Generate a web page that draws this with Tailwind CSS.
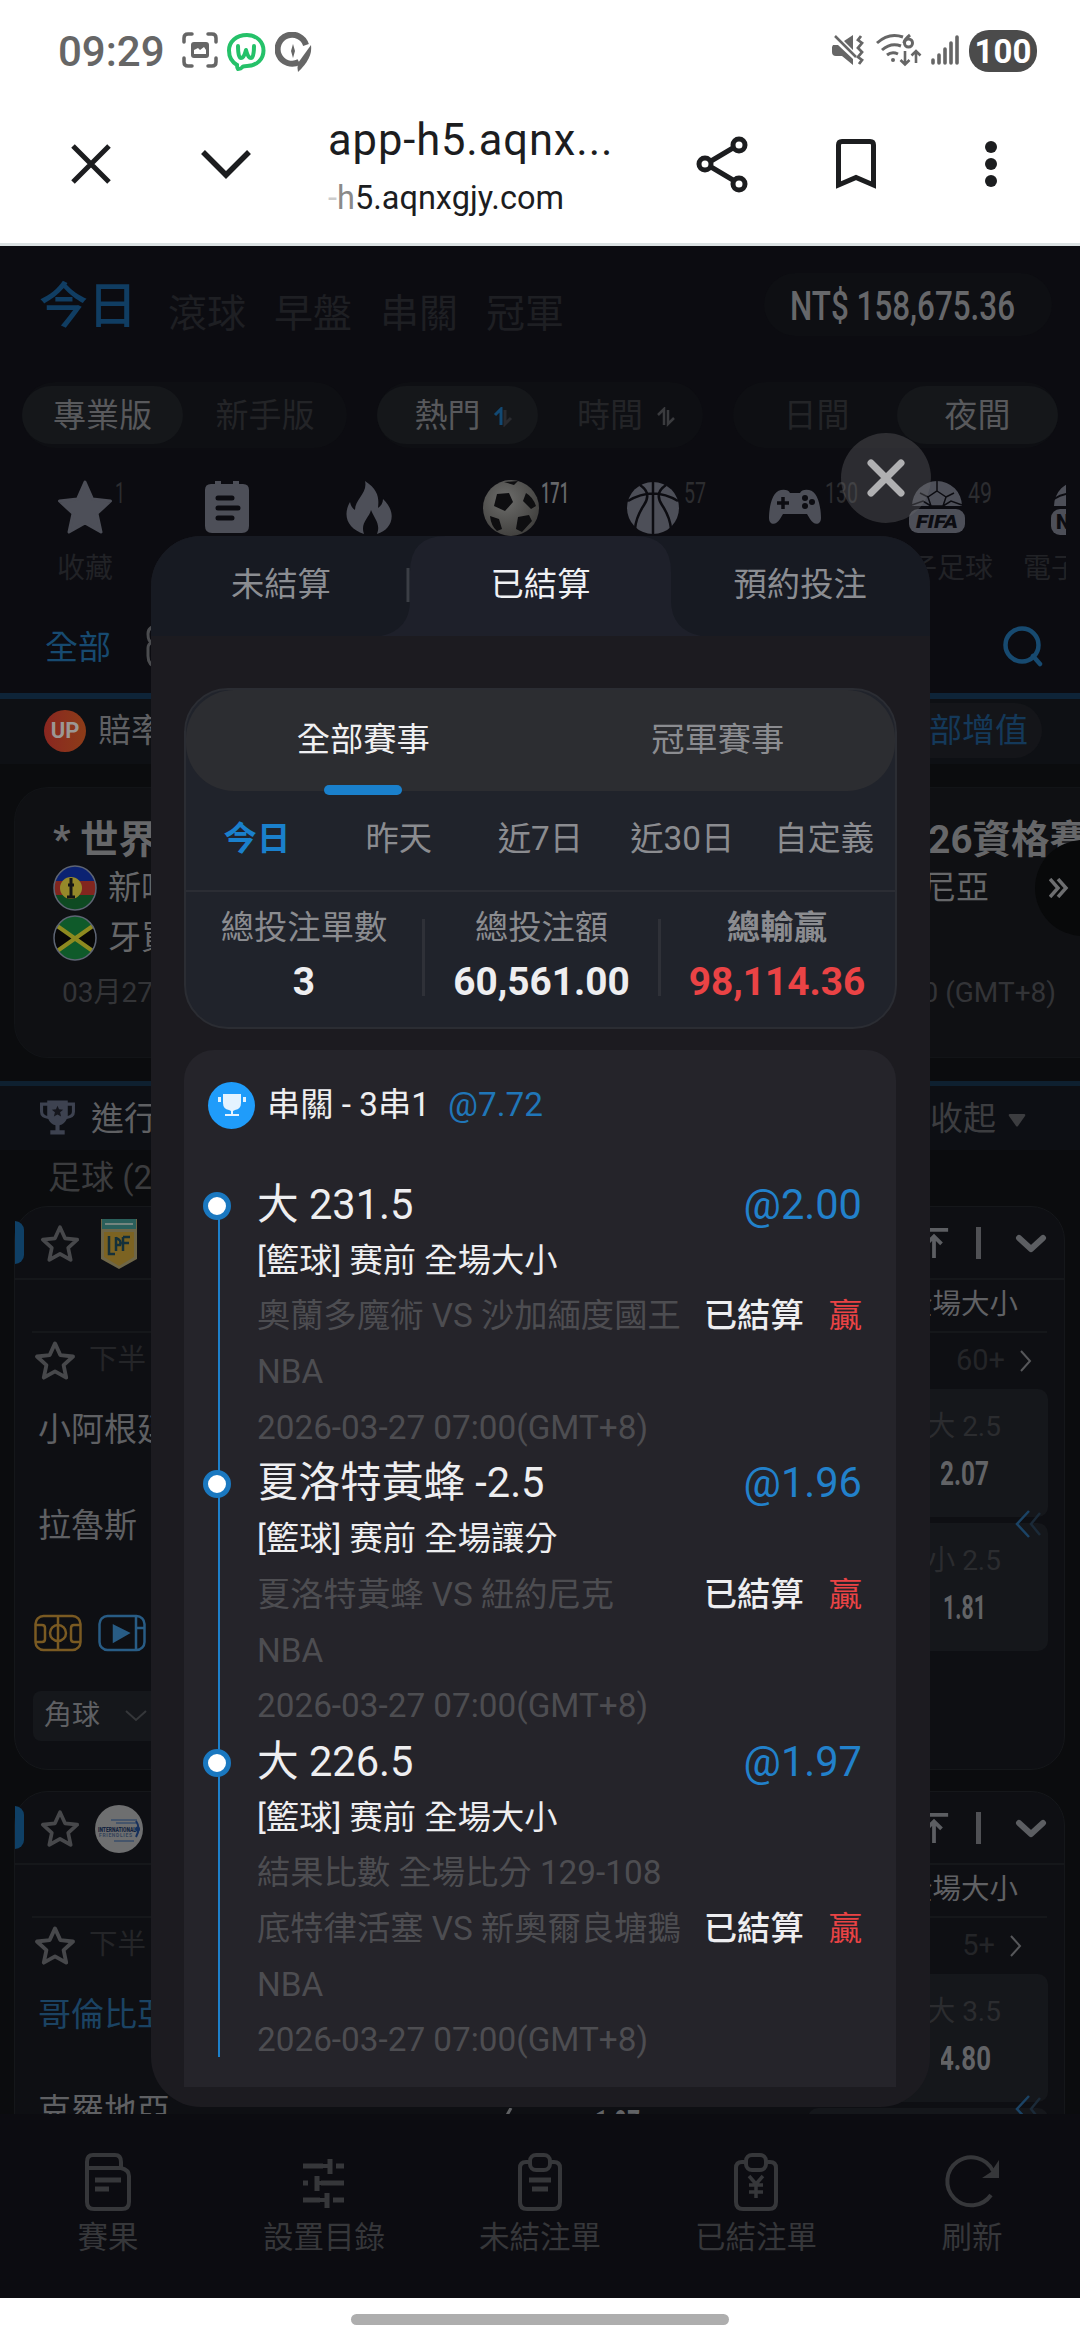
<!DOCTYPE html>
<html lang="zh-Hant">
<head>
<meta charset="utf-8">
<title>app-h5</title>
<script src="https://cdn.jsdelivr.net/npm/@tailwindcss/browser@4"></script>
</head>
<body class="relative w-[1080px] h-[2340px] overflow-hidden bg-white font-['Roboto','Noto_Sans_CJK_TC',sans-serif] whitespace-nowrap">
<svg class="hidden">
  <symbol id="star" viewBox="0 0 40 40"><path d="M20 4l4.800 10.600 11.600 1.300-8.600 7.800 2.400 11.400L20 29.400 9.800 35.100l2.400-11.400-8.600-7.800 11.600-1.300z" fill="none" stroke="#47484b" stroke-width="3.500" stroke-linejoin="round"/></symbol>
  <symbol id="totop" viewBox="0 0 34 34"><path d="M2 3h30M17 33V10M9 18l8-8 8 8" fill="none" stroke="#5c5e62" stroke-width="4"/></symbol>
  <symbol id="down" viewBox="0 0 32 20"><path d="M4 4l12 11L28 4" fill="none" stroke="#5c5e62" stroke-width="6" stroke-linecap="round" stroke-linejoin="round"/></symbol>
  <symbol id="right" viewBox="0 0 14 24"><path d="M2 2l9 10-9 10" fill="none" stroke="#56575a" stroke-width="2"/></symbol>
  <symbol id="back" viewBox="0 0 28 28"><path d="M15 1L3 14l12 13" fill="none" stroke="#1b4365" stroke-width="2.500"/><path d="M26 3L17 14l9 11" fill="none" stroke="#1b2a38" stroke-width="2.500"/></symbol>
  <symbol id="cup" viewBox="0 0 36 36"><path d="M8 1h20v2h7v9q0 6-8 7-2 5-7 6v5h5v4H11v-4h5v-5q-5-1-7-6-8-1-8-7V3h7zM4 6v6q0 3 4 4V6zM28 6v10q4-1 4-4V6z" fill-rule="evenodd"/></symbol>
</svg>

<div class="flex h-[2340px] flex-col">
  <!-- status bar -->
  <header class="flex h-[100px] shrink-0 items-center bg-white pl-[58px] pr-[43px]">
    <span class="mt-[4px] w-[124px] text-[42px] font-medium leading-none text-[#666]">09:29</span>
    <svg class="h-9 w-9" viewBox="0 0 36 36" fill="none" stroke="#666" stroke-width="3.500" stroke-linecap="round"><path d="M2 10V6q0-4 4-4h4M26 2h4q4 0 4 4v4M34 26v4q0 4-4 4h-4M10 34H6q-4 0-4-4v-4"/><path d="M12 10h12q3 0 3 3v10q0 3-3 3H12q-3 0-3-3V13q0-3 3-3z" fill="#666" stroke="none"/><path d="M12 22v-4l4-2 2 2 4-3 2 3v4z" fill="#fff" stroke="none"/></svg>
    <svg class="ml-[8px] mt-[3px] h-[40px] w-[40px]" viewBox="0 0 40 40" fill="none" stroke="#25c169" stroke-width="4"><path d="M21 3C31 3 37.500 10 37.500 18.500S31 34 21 34q-4 0-5 1.500T12 37q-1-1-1-4C6 30 3 25 3 18.500 3 10 10 3 21 3z"/><path d="M12 14q0 12 3 12t5-8q2 8 5 8t3-12" stroke-linecap="round" stroke-linejoin="round"/></svg>
    <svg class="ml-[9px] mt-[3px] h-[40px] w-[38px]" viewBox="0 0 38 40"><path d="M25 30A14.500 14.500 0 1 1 32 13" fill="none" stroke="#666" stroke-width="6" transform="translate(-1 0)"/><path d="M36 13q2 13-13 27-1-4 0-9z" fill="#666"/><path d="M18 12l2 7-2 7-2-7z" fill="#666"/></svg>
    <div class="grow"></div>
    <svg class="h-[32px] w-[32px]" viewBox="0 0 32 32"><path d="M1 11h5L21 25v6L10 22H4q-4 0-4-4v-5zM12 7l9-6v15z" fill="#666"/><path d="M3 2l21 21" stroke="#666" stroke-width="2.500"/><path d="M29 2l-3 4 4 3-4 5 4 4-4 5 4 3-3 4" fill="none" stroke="#666" stroke-width="2.800"/></svg>
    <svg class="ml-[12px] h-[34px] w-[46px]" viewBox="0 0 46 34" fill="none" stroke="#666" stroke-width="3"><path d="M1 10Q13-1 27 4M6 17q9-8 19-4M11 22q5-4 11-1"/><circle cx="17" cy="27" r="2" fill="#666" stroke="none"/><path d="M34 2q-6 5-6 8" /><circle cx="32.500" cy="10" r="4"/><path d="M29 18v13M24.500 27l4.500 4.500 4.500-4.500M40 30V18M35.500 22.500L40 18l4.500 4.500" stroke-width="2.600"/></svg>
    <svg class="ml-[9px] h-[30px] w-[28px]" viewBox="0 0 28 30" stroke="#666" stroke-width="3.600" stroke-linecap="round"><path d="M2 25v3M8 20v8M14 14v14M20 8v20M26 2v26"/></svg>
    <div class="ml-[10px] mt-[2px] flex h-[42px] w-[68px] items-center justify-center rounded-[20px] bg-[#4b4b4b] text-[33px] font-bold leading-none text-white">100</div>
  </header>
  <!-- browser toolbar -->
  <div class="flex h-[146px] shrink-0 items-start border-b-[3px] border-[#dbe1e2] pt-[6px]">
    <svg class="ml-[71px] mt-[38px] h-10 w-10" viewBox="0 0 40 40" stroke="#1c1d1f" stroke-width="5"><path d="M2 2l36 36M38 2L2 38"/></svg>
    <svg class="ml-[90px] mt-[42px] h-[34px] w-[50px]" viewBox="0 0 50 34" fill="none" stroke="#1c1d1f" stroke-width="5.500"><path d="M2 4l23 23L48 4"/></svg>
    <div class="ml-[77px] w-[368px] text-[#1c1d1f]">
      <div class="mt-[10px] text-[43.500px] leading-[50px] tracking-[0.9px]">app-h5.aqnx...</div>
      <div class="mt-[14px] text-[32.500px] leading-[36px]"><span class="text-[#ccc]">-</span><span class="text-[#8a8a8a]">h</span>5.aqnxgjy.com</div>
    </div>
    <svg class="mt-[28px] h-[60px] w-[54px]" viewBox="0 0 54 60" fill="none" stroke="#1c1d1f" stroke-width="5"><path d="M10 30L42 11M10 30l32 19"/><g fill="#fff"><circle cx="43" cy="11" r="6"/><circle cx="9" cy="30" r="6"/><circle cx="43" cy="50" r="6"/></g></svg>
    <svg class="ml-[85px] mt-[32px] h-[52px] w-[42px]" viewBox="0 0 42 52" fill="none" stroke="#1c1d1f" stroke-width="5"><path d="M3.500 47V7q0-3.500 3.500-3.500h28q3.500 0 3.500 3.500v40L21 39.500z"/></svg>
    <svg class="ml-[107px] mt-[34px] h-[48px] w-[14px]" viewBox="0 0 14 48" fill="#1c1d1f"><circle cx="7" cy="7" r="6"/><circle cx="7" cy="24" r="6"/><circle cx="7" cy="41" r="6"/></svg>
  </div>

  <!-- page -->
  <main class="flex h-[1868px] shrink-0 flex-col overflow-hidden bg-[#0c0c11]">
    <div class="flex h-[136px] shrink-0 items-start pl-[39px]">
      <span class="mt-[31px] w-[98px] text-[49px] font-medium leading-[60px] text-[#103d62]">今日</span>
      <div class="ml-[31px] mt-[42px] flex gap-[28px] text-[39px] leading-[52px] text-[#1e1f23]"><span>滾球</span><span>早盤</span><span>串關</span><span>冠軍</span></div>
      <div class="ml-auto mr-[28px] mt-[27px] flex h-[63px] w-[288px] items-center justify-center rounded-full bg-[#0e0f13] pr-[10px]">
        <svg class="h-[50px] w-[228px]" viewBox="0 0 228 50"><text x="1" y="40" font-size="41" textLength="225" lengthAdjust="spacingAndGlyphs" fill="#66676a" font-weight="500">NT$ 158,675.36</text></svg>
      </div>
    </div>
    <div class="flex h-[66px] shrink-0 gap-[30px] px-[22px] text-[33px] leading-none">
      <div class="flex w-[325px] items-center rounded-full bg-[#0e0f13]"><div class="flex h-[58px] w-[161px] items-center justify-center rounded-full bg-[#15171a] text-[#58595c]">專業版</div><div class="grow text-center text-[#232427]">新手版</div></div>
      <div class="flex w-[326px] items-center rounded-full bg-[#0e0f13]"><div class="flex h-[58px] w-[161px] items-center justify-center gap-[12px] rounded-full bg-[#15171a] pl-[12px] text-[#58595c]">熱門<svg class="mt-1 h-5 w-5" viewBox="0 0 20 20" fill="none" stroke-width="3"><path d="M2 8l6-6v16" stroke="#124973"/><path d="M12 3v14l6-6" stroke="#2a2b2f"/></svg></div><div class="flex grow items-center justify-center gap-[13px] pl-[12px] text-[#232427]">時間<svg class="mt-1 h-5 w-5" viewBox="0 0 20 20" fill="none" stroke-width="2.500" stroke="#3a3b3e"><path d="M2 8l6-6v16M12 3v14l6-6"/></svg></div></div>
      <div class="flex w-[325px] items-center rounded-full bg-[#0e0f13]"><div class="grow pl-[3px] text-center text-[#232427]">日間</div><div class="flex h-[58px] w-[161px] items-center justify-center rounded-full bg-[#15171a] text-[#58595c]">夜間</div></div>
    </div>
    <!-- sports -->
    <div class="flex h-[144px] w-[1066px] shrink-0 overflow-hidden pl-[14px] pt-[31px] text-[28px] text-[#212226]">
      <div class="relative flex w-[142px] shrink-0 flex-col items-center"><svg class="h-[56px] w-[56px]" viewBox="0 0 56 56"><path d="M28 3l7.500 17 18 2-13.500 12.500L44 53 28 44 12 53l4-18.500L2.500 22l18-2z" fill="#4d4f58" stroke="#4d4f58" stroke-width="3" stroke-linejoin="round"/></svg><svg class="absolute left-[101px] top-0 h-8 w-5" viewBox="0 0 20 32"><text y="24" font-size="29" textLength="10" lengthAdjust="spacingAndGlyphs" fill="#2c2d30">1</text></svg><span class="mt-[14px] leading-[40px]">收藏</span></div>
      <div class="flex w-[142px] shrink-0 justify-center"><svg class="h-[56px] w-[56px]" viewBox="0 0 56 56"><path d="M12 5h4V2h6v3h12V2h6v3h4q6 0 6 6v36q0 7-7 7H13q-7 0-7-7V11q0-6 6-6z" fill="#4d4f58"/><path d="M19 19h14M19 29h20M19 39h14" stroke="#0c0c11" stroke-width="5" stroke-linecap="round"/></svg></div>
      <div class="flex w-[142px] shrink-0 justify-center"><svg class="h-[56px] w-[56px]" viewBox="0 0 56 56"><path d="M24 2c14 9 14 18 13 27 3-2 5-5 5-9 15 14 9 31-6 35 4-10-3-16-6-24-2 8-11 13-7 24C7 50 1 37 9 23c1 4 2 6 5 8C14 20 27 14 24 2z" fill="#4d4f58"/></svg></div>
      <div class="relative flex w-[142px] shrink-0 justify-center"><svg class="h-[58px] w-[58px]" viewBox="0 0 58 58"><defs><radialGradient id="ball" cx=".4" cy=".35" r=".75"><stop offset="0" stop-color="#6d6d6b"/><stop offset="1" stop-color="#3c3b39"/></radialGradient></defs><circle cx="29" cy="29" r="28" fill="url(#ball)"/><path d="M15 15l12-1 4 9-8 9-11-5zM44 14q7 4 10 13l-5 3-8-8zM36 38l11-2 3 6-10 11-6-3zM8 37l9 3 3 10-5 2q-6-5-7-15zM22 3l14-1-4 4z" fill="#0e0e10"/></svg><svg class="absolute left-[101px] top-0 h-8 w-8" viewBox="0 0 32 32"><text y="24" font-size="29" textLength="28" lengthAdjust="spacingAndGlyphs" font-weight="500" fill="#66676a">171</text></svg></div>
      <div class="relative flex w-[142px] shrink-0 justify-center"><svg class="h-[56px] w-[56px]" viewBox="0 0 56 56"><circle cx="28" cy="29" r="26" fill="#4d4f58"/><path d="M28 2v54M3 22q25-15 50 0M15 6q12 8 4 20t-9 24M41 6q-12 8-4 20t9 24" fill="none" stroke="#0c0c11" stroke-width="2.500"/></svg><svg class="absolute left-[102px] top-0 h-8 w-8" viewBox="0 0 32 32"><text y="24" font-size="29" textLength="22" lengthAdjust="spacingAndGlyphs" fill="#2c2d30">57</text></svg></div>
      <div class="relative flex w-[142px] shrink-0 justify-center"><svg class="h-[56px] w-[56px]" viewBox="0 0 56 56"><path d="M14 11q7-1 9 3h10q2-4 9-3c9 1 12 18 12 28 0 7-7 8-11 1l-3-5H16l-3 5c-4 7-11 6-11-1 0-10 3-27 12-28z" fill="#4d4f58"/><path d="M16 18v12M10 24h12" stroke="#0c0c11" stroke-width="3.500"/><g fill="#0c0c11"><circle cx="38" cy="19" r="3"/><circle cx="38" cy="27" r="3"/><circle cx="45" cy="23" r="3"/></g></svg><svg class="absolute left-[101px] top-0 h-8 w-9" viewBox="0 0 36 32"><text y="24" font-size="29" textLength="33" lengthAdjust="spacingAndGlyphs" fill="#2c2d30">130</text></svg></div>
      <div class="relative flex w-[142px] shrink-0 flex-col items-center"><svg class="h-[56px] w-[56px]" viewBox="0 0 56 56"><path d="M3 27a25 25 0 0 1 50 0z" fill="#4d4f58"/><path d="M28 12l9 6-3 9H22l-3-9zM28 12V2M37 18l8-4M19 18l-8-4M34 27l8-5 11 4M22 27l-8-5-11 4" fill="none" stroke="#0c0c11" stroke-width="1.500"/><rect x="0" y="30" width="56" height="24" rx="9" fill="#4d4f58"/><text x="7" y="49" font-size="18" font-weight="900" font-style="italic" textLength="42" lengthAdjust="spacingAndGlyphs" fill="#0c0c11">FIFA</text></svg><svg class="absolute left-[102px] top-0 h-8 w-8" viewBox="0 0 32 32"><text y="24" font-size="29" textLength="24" lengthAdjust="spacingAndGlyphs" fill="#2c2d30">49</text></svg><span class="mt-[14px] leading-[40px]">電子足球</span></div>
      <div class="flex w-[142px] shrink-0 flex-col items-center"><svg class="h-[56px] w-[56px]" viewBox="0 0 56 56"><path d="M3 27a25 25 0 0 1 50 0z" fill="#4d4f58"/><path d="M3 20q12-8 25-4" stroke="#0c0c11" fill="none" stroke-width="2"/><rect x="0" y="30" width="56" height="26" rx="9" fill="#4d4f58"/><text x="5" y="50" font-size="20" font-weight="900" fill="#0c0c11">NBA</text></svg><span class="mt-[14px] leading-[40px]">電子籃球</span></div>
    </div>
    <!-- league filter -->
    <div class="flex h-[101px] shrink-0 items-center pl-[45px] pr-[36px]">
      <span class="mt-[10px] text-[33px] leading-none text-[#174a70]">全部</span>
      <svg class="ml-[35px] mt-[8px] h-[46px] w-[24px]" viewBox="0 0 24 46" fill="none" stroke="#4b4c4f" stroke-width="3"><path d="M12 2Q2 2 2 10t4 8q-4 2-4 6v8q0 10 10 12"/></svg>
      <svg class="ml-auto mt-[6px] h-[42px] w-[42px]" viewBox="0 0 42 42" fill="none" stroke="#174a70" stroke-width="4.500"><circle cx="20" cy="20" r="16.500"/><path d="M31 31l7 8" stroke-linecap="round"/></svg>
    </div>
    <div class="h-[6px] shrink-0 bg-[#0e2438]"></div>
    <div class="flex h-[65px] shrink-0 items-center bg-[#0e1014] pb-[2px] pl-[44px] pr-[38px] text-[33px] leading-none text-[#5f6063]">
      <div class="flex h-[42px] w-[42px] items-center justify-center rounded-full bg-linear-to-r from-[#8a2620] to-[#8c3c18] text-[22px] font-bold text-[#9c9794]">UP</div>
      <span class="ml-[12px]">賠率</span>
      <div class="ml-auto flex h-[55px] w-[164px] items-center justify-center rounded-full bg-[#141519] pl-[4px] text-[#14395a]">全部增值</div>
    </div>
    <!-- featured match -->
    <div class="flex h-[317px] shrink-0 flex-col bg-[#0b0c0e] pl-[14px] pt-[23px]">
      <section class="relative h-[271px] rounded-l-[34px] border border-r-0 border-[#121417] bg-[#0f1013] pl-[38px] text-[33px] text-[#666769]">
        <div class="mt-[27px] flex h-[50px] items-center justify-between overflow-hidden text-[38.500px] font-bold leading-none"><span>* 世界盃</span><span class="-mr-[8px]">2026資格賽</span></div>
        <div class="-mt-[2px] flex h-[50px] items-center justify-between pr-[91px]"><div class="flex items-center gap-[11px]"><svg class="h-[46px] w-[44px]" viewBox="0 0 44 46"><clipPath id="fc"><ellipse cx="22" cy="23" rx="21" ry="22"/></clipPath><g clip-path="url(#fc)"><path d="M0 0h44v16H0z" fill="#0b2272"/><path d="M0 16h44v14H0z" fill="#82261f"/><path d="M0 30h44v16H0z" fill="#0e4a22"/><circle cx="18" cy="23" r="11" fill="#96892a"/><path d="M18 13v20M15 20h6M14 32h8" stroke="#151515" stroke-width="3"/></g><ellipse cx="22" cy="23" rx="21" ry="22" fill="none" stroke="#5e6574" stroke-width="1.500"/></svg>新喀</div><span>尼亞</span></div>
        <div class="flex h-[50px] items-center gap-[11px]"><svg class="h-[46px] w-[44px]" viewBox="0 0 44 46"><g clip-path="url(#fc)"><path d="M0 0h44v46H0z" fill="#0f5a2a"/><path d="M0 6l22 17L0 40zM44 6L22 23l22 17z" fill="#080808"/><path d="M0 8l44 31M44 8L0 39" stroke="#8e8a20" stroke-width="4"/></g><ellipse cx="22" cy="23" rx="21" ry="22" fill="none" stroke="#5e6574" stroke-width="1.500"/></svg>牙買</div>
        <div class="mt-[10px] flex h-[40px] items-center justify-between pl-[9px] pr-[24px] text-[28px] text-[#333437]"><span>03月27</span><span>00 (GMT+8)</span></div>
        <div class="absolute -right-[51px] top-[52px] h-[96px] w-[96px] rounded-full bg-[#08090a]"><svg class="ml-[14px] mt-[38px] h-[20px] w-[20px]" viewBox="0 0 20 20" fill="none" stroke="#6d6e70" stroke-width="3.500"><path d="M1 1l8 9-8 9M9 1l8 9-8 9"/></svg></div>
      </section>
    </div>
    <div class="h-[5px] shrink-0 bg-[#0e2030]"></div>
    <div class="flex h-[64px] shrink-0 items-center bg-[#0d0f14] pl-[39px] pr-[54px] text-[33px] leading-none">
      <svg class="h-[38px] w-[37px] text-[#3d4250]" fill="currentColor" viewBox="0 0 36 36"><use href="#cup"/><path d="M18 6l1.500 3.500 4 .5-3 2.500 1 4-3.500-2-3.500 2 1-4-3-2.500 4-.5z" fill="#15161d"/></svg>
      <span class="ml-[15px] text-[#5f6063]">進行</span>
      <span class="ml-auto text-[#3c3d40]">收起</span>
      <svg class="ml-[12px] mt-1 h-[14px] w-[18px]" viewBox="0 0 18 14"><path d="M2 1h14q2 0 1 2l-7 10q-1 1-2 0L1 3Q0 1 2 1z" fill="#3c3d40"/></svg>
    </div>
    <div class="flex h-[56px] shrink-0 items-center bg-[#0b0c0e] pb-[2px] pl-[48px] text-[33px] leading-none text-[#3b3c3e]">足球 (2)</div>

    <div class="flex grow flex-col gap-[21px] bg-[#0b0c0e] pl-[14px] pr-[15px]">
      <!-- match 1 -->
      <section class="h-[564px] shrink-0 rounded-[34px] border border-[#15171a] bg-[#0e0f13]">
        <div class="flex h-[73px] items-center border-b-2 border-[#15171a] pr-[17px]">
          <div class="h-[43px] w-[9px] rounded-r-[9px] bg-[#0f4066]"></div>
          <svg class="ml-[15px] mt-[2px] h-[42px] w-[42px]"><use href="#star"/></svg>
          <svg class="ml-[20px] mt-[2px] h-[50px] w-[36px]" viewBox="0 0 36 50"><path d="M0 0h36v40L18 50 0 40z" fill="#6e6648"/><path d="M1 0h34v10H1z" fill="#2a5f5b"/><path d="M3 13h30v25l-15 9-15-9z" fill="#7c6322"/><path d="M8 17v18h6M15 18v14M15 19q6 2 4 7h-4M22 18v14M22 18h7M22 24h6" fill="none" stroke="#14303a" stroke-width="2.500"/><path d="M4 5h28" stroke="#75857f" stroke-width="2"/></svg>
          <svg class="ml-auto h-[32px] w-[34px]"><use href="#totop"/></svg>
          <div class="ml-[25px] h-[32px] w-[5px] bg-[#505155]"></div>
          <svg class="ml-[34px] mt-[2px] h-[20px] w-[32px]"><use href="#down"/></svg>
        </div>
        <div class="mx-[17px] flex h-[53px] items-center justify-end border-b-2 border-[#15171a] pr-[29px] text-[28.500px] leading-none text-[#606164]">全場大小</div>
        <div class="flex h-[56px] items-center pb-[1px] pl-[18px] pr-[31px] text-[28.500px] leading-none text-[#242528]"><svg class="h-[44px] w-[44px]"><use href="#star"/></svg><span class="ml-[12px]">下半</span><span class="ml-auto text-[29px]">60+</span><svg class="ml-[14px] h-[24px] w-[14px]"><use href="#right"/></svg></div>
        <div class="flex justify-between pl-[23px] pr-[16px]">
          <div class="flex flex-col text-[33px] leading-none text-[#5f6063]">
            <span class="mt-[24px]">小阿根廷</span>
            <span class="mt-[63px]">拉魯斯</span>
            <div class="-ml-[4px] mt-[72px] flex gap-[16px]">
              <svg class="h-[38px] w-[48px]" viewBox="0 0 48 38" fill="none" stroke="#7a5a22" stroke-width="2.500"><rect x="1.500" y="2" width="45" height="34" rx="8"/><path d="M24 2v34M2 11h6q3 0 3 3v11q0 3-3 3H2M46 11h-6q-3 0-3 3v11q0 3 3 3h6"/><circle cx="24" cy="19" r="8"/></svg>
              <svg class="h-[38px] w-[48px]" viewBox="0 0 48 38" fill="none" stroke="#285c85" stroke-width="2.500"><rect x="1.500" y="2" width="45" height="34" rx="8"/><path d="M38 2v34M38 14h8"/><path d="M16 12l14 7-14 8z" fill="#285c85"/></svg>
            </div>
            <div class="-ml-[5px] mt-[39px] flex h-[50px] w-[150px] items-center rounded-[8px] bg-[#15171b] pl-[11px] text-[28px]">角球<svg class="ml-[24px] h-[12px] w-[24px]" viewBox="0 0 24 12" fill="none" stroke="#35373a" stroke-width="2"><path d="M2 1l10 9 10-9"/></svg></div>
          </div>
          <div class="relative flex w-[240px] flex-col gap-[6px] text-[28px] leading-none">
            <div class="flex h-[128px] flex-col items-end rounded-[10px] bg-[#15171b] pr-[47px] pt-[24px] text-[#2b2c2f]"><span>大 2.5</span><svg class="mt-[17px] h-[30px] w-[60px]" viewBox="0 0 60 30"><text x="-1" y="27" font-size="33" font-weight="700" textLength="49" lengthAdjust="spacingAndGlyphs" fill="#626366">2.07</text></svg></div>
            <div class="flex h-[128px] flex-col items-end rounded-[10px] bg-[#15171b] pr-[47px] pt-[24px] text-[#2b2c2f]"><span>小 2.5</span><svg class="mt-[17px] h-[30px] w-[60px]" viewBox="0 0 60 30"><text x="2" y="27" font-size="33" font-weight="700" textLength="43" lengthAdjust="spacingAndGlyphs" fill="#626366">1.81</text></svg></div>
            <svg class="absolute right-[6px] top-[121px] h-[28px] w-[28px]"><use href="#back"/></svg>
          </div>
        </div>
      </section>
      <!-- match 2 -->
      <section class="h-[564px] shrink-0 rounded-[34px] border border-[#15171a] bg-[#0e0f13]">
        <div class="flex h-[73px] items-center border-b-2 border-[#15171a] pr-[17px]">
          <div class="h-[43px] w-[9px] rounded-r-[9px] bg-[#0f4066]"></div>
          <svg class="ml-[15px] mt-[2px] h-[42px] w-[42px]"><use href="#star"/></svg>
          <svg class="ml-[13px] mt-[3px] h-[50px] w-[50px]" viewBox="0 0 50 50"><circle cx="25" cy="25" r="24" fill="#6e6f70"/><text x="4" y="28" font-size="8" font-weight="900" textLength="38" lengthAdjust="spacingAndGlyphs" fill="#14243f">INTERNATIONAL</text><path d="M17 16h26M22 19h20M20 37h20" stroke="#1d3c66" stroke-width="1.200"/><text x="5" y="33" font-size="5" font-weight="700" textLength="33" fill="#34435a">FRIENDLIES</text><path d="M42 17q5 7 0 16" fill="none" stroke="#16305c" stroke-width="2"/><circle cx="43.500" cy="25" r="2.500" fill="#16305c"/></svg>
          <svg class="ml-auto h-[32px] w-[34px]"><use href="#totop"/></svg>
          <div class="ml-[25px] h-[32px] w-[5px] bg-[#505155]"></div>
          <svg class="ml-[34px] mt-[2px] h-[20px] w-[32px]"><use href="#down"/></svg>
        </div>
        <div class="mx-[17px] flex h-[53px] items-center justify-end border-b-2 border-[#15171a] pr-[29px] text-[28.500px] leading-none text-[#606164]">全場大小</div>
        <div class="flex h-[56px] items-center pb-[1px] pl-[18px] pr-[41px] text-[28.500px] leading-none text-[#242528]"><svg class="h-[44px] w-[44px]"><use href="#star"/></svg><span class="ml-[12px]">下半</span><span class="ml-auto text-[29px]">5+</span><svg class="ml-[14px] h-[24px] w-[14px]"><use href="#right"/></svg></div>
        <div class="flex pl-[23px] pr-[16px]">
          <div class="flex flex-col text-[33px] leading-none text-[#5f6063]">
            <span class="mt-[24px] text-[#1b4363]">哥倫比亞</span>
            <span class="mt-[63px]">克羅地亞</span>
          </div>
          <svg class="ml-[332px] mt-[134px] h-[32px] w-[140px]" viewBox="0 0 140 32"><path d="M9 0L4 9" stroke="#5f6063" stroke-width="3"/><text x="93" y="26" font-size="33" font-weight="700" textLength="45" lengthAdjust="spacingAndGlyphs" fill="#626366">1.97</text></svg>
          <div class="relative ml-auto flex w-[240px] flex-col gap-[6px] text-[28px] leading-none">
            <div class="flex h-[128px] flex-col items-end rounded-[10px] bg-[#15171b] pr-[47px] pt-[24px] text-[#2b2c2f]"><span>大 3.5</span><svg class="mt-[17px] h-[30px] w-[60px]" viewBox="0 0 60 30"><text x="-2" y="27" font-size="33" font-weight="700" textLength="52" lengthAdjust="spacingAndGlyphs" fill="#626366">4.80</text></svg></div>
            <div class="h-[128px] rounded-[10px] bg-[#15171b]"></div>
            <svg class="absolute right-[6px] top-[121px] h-[28px] w-[28px]"><use href="#back"/></svg>
          </div>
        </div>
      </section>
    </div>
  </main>

  <!-- bottom navigation -->
  <nav class="grid h-[184px] shrink-0 grid-cols-5 bg-[#0c0c11] pt-[38px] text-[30.500px] text-[#36373a]">
    <div class="flex flex-col items-center"><svg class="h-[60px] w-[60px]" viewBox="0 0 60 60" fill="none" stroke="#36373a" stroke-width="4"><path d="M9 16V10q0-7 6-7h22q6 0 6 7v6q8 2 8 8v26q0 7-7 7H16q-7 0-7-7zM9 16h34"/><path d="M17 28h26M17 37h14" stroke-width="5"/></svg><span class="mt-[4px] leading-[44px]">賽果</span></div>
    <div class="flex flex-col items-center"><svg class="h-[60px] w-[60px]" viewBox="0 0 60 60" fill="none" stroke="#36373a" stroke-width="5"><path d="M9 14h20M42 14h8M9 31h5M27 31h23M9 48h17M39 48h11M36 7v15M23 24v15M33 41v15"/><path d="M28 14h10M21 31h7M24 48h9" stroke-width="4"/></svg><span class="mt-[4px] leading-[44px]">設置目錄</span></div>
    <div class="flex flex-col items-center"><svg class="h-[60px] w-[60px]" viewBox="0 0 60 60" fill="none" stroke="#36373a" stroke-width="4"><path d="M20 10h-4q-6 0-6 6v34q0 7 7 7h26q7 0 7-7V16q0-6-6-6h-4"/><rect x="20" y="3" width="20" height="15" rx="6"/><path d="M19 28h22M22 37h16" stroke-width="5"/></svg><span class="mt-[4px] leading-[44px]">未結注單</span></div>
    <div class="flex flex-col items-center"><svg class="h-[60px] w-[60px]" viewBox="0 0 60 60" fill="none" stroke="#36373a" stroke-width="4"><path d="M20 10h-4q-6 0-6 6v34q0 7 7 7h26q7 0 7-7V16q0-6-6-6h-4"/><rect x="20" y="3" width="20" height="15" rx="6"/><path d="M23 24l7 8 7-8M30 32v14M23 33h14M23 40h14" stroke-width="3.500"/></svg><span class="mt-[4px] leading-[44px]">已結注單</span></div>
    <div class="flex flex-col items-center"><svg class="h-[60px] w-[60px]" viewBox="0 0 60 60" fill="none" stroke="#36373a" stroke-width="4"><path d="M49 43A24 24 0 1 1 51 19"/><path d="M57 8v18H40l9-6z" fill="#36373a" stroke="none"/></svg><span class="mt-[4px] leading-[44px]">刷新</span></div>
  </nav>
  <div class="flex h-[42px] shrink-0 justify-center bg-white pt-[16px]"><div class="h-[11px] w-[378px] rounded-full bg-[#aeaeae]"></div></div>
</div>

<!-- bet record dialog -->
<div class="absolute left-[151px] top-[536px] flex h-[1571px] w-[779px] flex-col overflow-hidden rounded-[50px] bg-[#1c1b20]">
  <div class="relative h-[100px] shrink-0">
    <svg class="absolute inset-0 h-[100px] w-[779px]" viewBox="0 0 779 100"><path d="M0 0h779v100H0z" fill="#171a22"/><path d="M230 100q29-6 29-36V36Q259 0 295 0h189q36 0 36 36v28q0 30 30 36z" fill="#1e202a"/><path d="M257 32v34" stroke="#3b3e45" stroke-width="3"/></svg>
    <div class="relative grid h-[97px] grid-cols-3 items-center text-center text-[33.300px] leading-none text-[#8b8d92]"><span>未結算</span><span class="text-[#f0f1f4]">已結算</span><span>預約投注</span></div>
  </div>
  <div class="flex min-h-0 grow flex-col px-[33px]">
    <section class="mt-[52px] h-[341px] w-[713px] shrink-0 overflow-hidden rounded-[44px] border-2 border-[#2b2d33] bg-[#20232b] text-[33.300px] leading-none text-[#8b8c90]">
      <div class="relative grid h-[101px] grid-cols-2 items-center rounded-[48px] bg-[#2c2d31] pb-[2px] text-center"><span class="text-[#f0f0f2]">全部賽事</span><span>冠軍賽事</span><div class="absolute left-[138px] top-[95px] h-[10px] w-[78px] rounded-full bg-[#1a80cc]"></div></div>
      <div class="grid h-[101px] grid-cols-5 items-center border-b-2 border-[#2b2d34] pb-[3px] text-center"><span class="font-bold text-[#1a80cc]">今日</span><span>昨天</span><span>近7日</span><span>近30日</span><span>自定義</span></div>
      <div class="flex pt-[27px] text-center">
        <div class="h-[77px] w-[239px] border-r-3 border-[#2f3138]"><div class="-mt-[8px]">總投注單數</div><div class="mt-[19px] text-[38.800px] font-bold text-[#eeeef0]">3</div></div>
        <div class="h-[77px] w-[236px] border-r-3 border-[#2f3138]"><div class="-mt-[8px]">總投注額</div><div class="mt-[19px] text-[38.800px] font-bold text-[#eeeef0]">60,561.00</div></div>
        <div class="h-[77px] grow pr-[2px]"><div class="-mt-[8px] font-bold">總輸贏</div><div class="mt-[19px] text-[38.800px] font-bold text-[#ea4345]">98,114.36</div></div>
      </div>
    </section>
    <section class="mt-[21px] h-[1037px] w-[712px] shrink-0 rounded-t-[30px] bg-[#25242a] pl-[20px] pr-[34px] text-[33.300px] text-[#4d4d51]">
      <div class="flex h-[110px] items-center pl-[4px] leading-none">
        <div class="flex h-[47px] w-[47px] items-center justify-center rounded-full bg-[#1f9cfa]"><svg class="h-[22px] w-[28px] text-[#e4f3ff]" viewBox="0 0 28 22" fill="currentColor"><path d="M5 0h18v9q0 6-6 7l-2 1v3h6v2H7v-2h6v-3l-2-1q-6-1-6-7zM0 3h3v5H0zM25 3h3v5h-3z"/></svg></div>
        <span class="ml-[12px] text-[#eeeef0]">串關 - 3串1</span><span class="ml-[18px] text-[#2076b8]">@7.72</span>
      </div>
      <div class="relative pl-[53px] pt-[17px] leading-[55.700px]">
        <div class="absolute left-[14px] top-[46px] h-[851px] w-[2px] bg-[#1d80cb]"></div>
        <article class="relative">
          <div class="absolute -left-[54px] top-[15px] h-7 w-7 rounded-full border-5 border-[#1a78c0] bg-white"></div>
          <div class="flex h-[55.700px] justify-between text-[41.600px] text-[#eeeef0]"><span>大 231.5</span><span class="text-[#2281cb]">@2.00</span></div>
          <div class="h-[55.700px] text-[#eeeef0]">[籃球] 赛前 全場大小</div>
          <div class="flex h-[55.700px]"><span>奧蘭多魔術 VS 沙加緬度國王</span><span class="ml-auto font-medium text-[#eeeef0]">已結算</span><span class="ml-[25px] text-[#ea4345]">贏</span></div>
          <div class="h-[55.700px]">NBA</div>
          <div class="h-[55.700px]">2026-03-27 07:00(GMT+8)</div>
        </article>
        <article class="relative">
          <div class="absolute -left-[54px] top-[15px] h-7 w-7 rounded-full border-5 border-[#1a78c0] bg-white"></div>
          <div class="flex h-[55.700px] justify-between text-[41.600px] text-[#eeeef0]"><span>夏洛特黃蜂 -2.5</span><span class="text-[#2281cb]">@1.96</span></div>
          <div class="h-[55.700px] text-[#eeeef0]">[籃球] 赛前 全場讓分</div>
          <div class="flex h-[55.700px]"><span>夏洛特黃蜂 VS 紐約尼克</span><span class="ml-auto font-medium text-[#eeeef0]">已結算</span><span class="ml-[25px] text-[#ea4345]">贏</span></div>
          <div class="h-[55.700px]">NBA</div>
          <div class="h-[55.700px]">2026-03-27 07:00(GMT+8)</div>
        </article>
        <article class="relative">
          <div class="absolute -left-[54px] top-[15px] h-7 w-7 rounded-full border-5 border-[#1a78c0] bg-white"></div>
          <div class="flex h-[55.700px] justify-between text-[41.600px] text-[#eeeef0]"><span>大 226.5</span><span class="text-[#2281cb]">@1.97</span></div>
          <div class="h-[55.700px] text-[#eeeef0]">[籃球] 赛前 全場大小</div>
          <div class="h-[55.700px]">結果比數 全場比分 129-108</div>
          <div class="flex h-[55.700px]"><span>底特律活塞 VS 新奧爾良塘鵝</span><span class="ml-auto font-medium text-[#eeeef0]">已結算</span><span class="ml-[25px] text-[#ea4345]">贏</span></div>
          <div class="h-[55.700px]">NBA</div>
          <div class="h-[55.700px]">2026-03-27 07:00(GMT+8)</div>
        </article>
      </div>
    </section>
  </div>
</div>
<!-- close button -->
<div class="absolute left-[841px] top-[433px] flex h-[90px] w-[90px] items-center justify-center rounded-full bg-[#6b6b6e]/35"><svg class="h-[40px] w-[40px]" viewBox="0 0 40 40" stroke="#b0b0b2" stroke-width="7" stroke-linecap="round"><path d="M5 5l30 30M35 5L5 35"/></svg></div>
</body>
</html>
